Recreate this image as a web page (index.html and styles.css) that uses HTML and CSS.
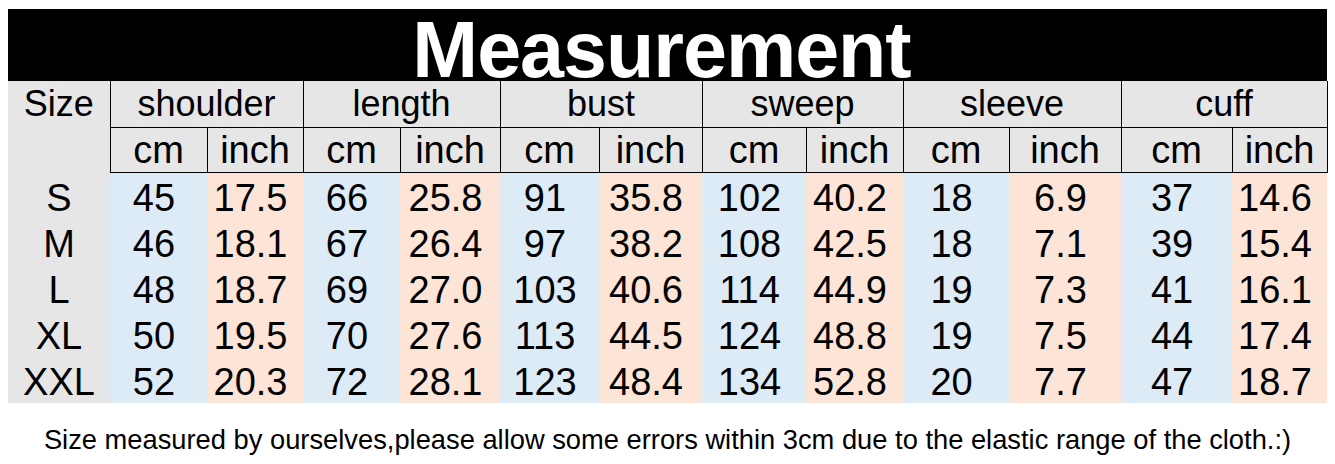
FILE: index.html
```html
<!DOCTYPE html>
<html lang="en">
<head>
  <meta charset="UTF-8" />
  <title>Measurement</title>
  <link rel="stylesheet" href="styles.css">
</head>
<body>

  <div class="sheet">
    <div class="title">Measurement</div>

    <table class="chart">
      <colgroup>
        <col style="width:102px"><col style="width:97px"><col style="width:96px">
        <col style="width:97px"><col style="width:100px"><col style="width:99px">
        <col style="width:103px"><col style="width:104px"><col style="width:97px">
        <col style="width:106px"><col style="width:112px"><col style="width:111px">
        <col style="width:95px">
      </colgroup>
      <thead>
        <tr class="groups">
          <th class="size-head">Size</th>
          <th colspan="2">shoulder</th>
          <th colspan="2">length</th>
          <th colspan="2">bust</th>
          <th colspan="2">sweep</th>
          <th colspan="2">sleeve</th>
          <th colspan="2" class="last">cuff</th>
        </tr>
        <tr class="units">
          <th class="size-head"></th>
          <th>cm</th><th>inch</th>
          <th>cm</th><th>inch</th>
          <th>cm</th><th>inch</th>
          <th>cm</th><th>inch</th>
          <th>cm</th><th>inch</th>
          <th>cm</th><th class="last">inch</th>
        </tr>
      </thead>
      <tbody>
        <tr>
          <td class="size">S</td>
          <td class="cm">45</td><td class="in">17.5</td>
          <td class="cm">66</td><td class="in">25.8</td>
          <td class="cm">91</td><td class="in">35.8</td>
          <td class="cm">102</td><td class="in">40.2</td>
          <td class="cm">18</td><td class="in">6.9</td>
          <td class="cm">37</td><td class="in">14.6</td>
        </tr>
        <tr>
          <td class="size">M</td>
          <td class="cm">46</td><td class="in">18.1</td>
          <td class="cm">67</td><td class="in">26.4</td>
          <td class="cm">97</td><td class="in">38.2</td>
          <td class="cm">108</td><td class="in">42.5</td>
          <td class="cm">18</td><td class="in">7.1</td>
          <td class="cm">39</td><td class="in">15.4</td>
        </tr>
        <tr>
          <td class="size">L</td>
          <td class="cm">48</td><td class="in">18.7</td>
          <td class="cm">69</td><td class="in">27.0</td>
          <td class="cm">103</td><td class="in">40.6</td>
          <td class="cm">114</td><td class="in">44.9</td>
          <td class="cm">19</td><td class="in">7.3</td>
          <td class="cm">41</td><td class="in">16.1</td>
        </tr>
        <tr>
          <td class="size">XL</td>
          <td class="cm">50</td><td class="in">19.5</td>
          <td class="cm">70</td><td class="in">27.6</td>
          <td class="cm">113</td><td class="in">44.5</td>
          <td class="cm">124</td><td class="in">48.8</td>
          <td class="cm">19</td><td class="in">7.5</td>
          <td class="cm">44</td><td class="in">17.4</td>
        </tr>
        <tr>
          <td class="size">XXL</td>
          <td class="cm">52</td><td class="in">20.3</td>
          <td class="cm">72</td><td class="in">28.1</td>
          <td class="cm">123</td><td class="in">48.4</td>
          <td class="cm">134</td><td class="in">52.8</td>
          <td class="cm">20</td><td class="in">7.7</td>
          <td class="cm">47</td><td class="in">18.7</td>
        </tr>
      </tbody>
    </table>

    <p class="note">Size measured by ourselves,please allow some errors within 3cm due to the elastic range of the cloth.:)</p>
  </div>

</body>
</html>
```

FILE: styles.css
```css
html, body {
  margin: 0;
  padding: 0;
  background: white;
  color: black;
  font-family: "Liberation Sans", Arial, sans-serif;
}

.sheet {
  width: 1319px;
  margin: 9px 0 0 8px;
}

.title {
  height: 62px;
  padding: 10px 12px 0 0;
  line-height: 62px;
  background: black;
  color: white;
  font-size: 79px;
  font-weight: bold;
  text-align: center;
  letter-spacing: -1px;
}

.chart {
  width: 1319px;
  table-layout: fixed;
  border-collapse: collapse;
  border-spacing: 0;
}

.chart th, .chart td {
  padding: 0;
  text-align: center;
  vertical-align: middle;
  font-weight: normal;
  white-space: nowrap;
}

.chart thead th {
  background: #e6e6e6;
  border-left: 1px solid black;
}

.chart th.size-head {
  border-left: none;
}

.chart th.last {
  border-right: 1px solid black;
}

.groups th {
  height: 46px;
  font-size: 36px;
  border-bottom: 1px solid black;
}

.units th {
  height: 44px;
  font-size: 38px;
  border-bottom: 1px solid black;
}

.chart th.size-head {
  border-bottom: none;
}

.chart td {
  height: 46px;
  font-size: 38px;
  padding-top: 4px;
  box-sizing: border-box;
  line-height: 40px;
}

.chart tbody tr {
  height: 46px;
}

.chart td.size {
  background: #e6e6e6;
}

.chart td.cm {
  background: #ddebf7;
  padding-right: 9px;
}

.chart td.in {
  background: #fce4d6;
  padding-right: 9px;
}

.note {
  margin: 21px 0 0;
  font-size: 27.3px;
  text-align: center;
}
```
